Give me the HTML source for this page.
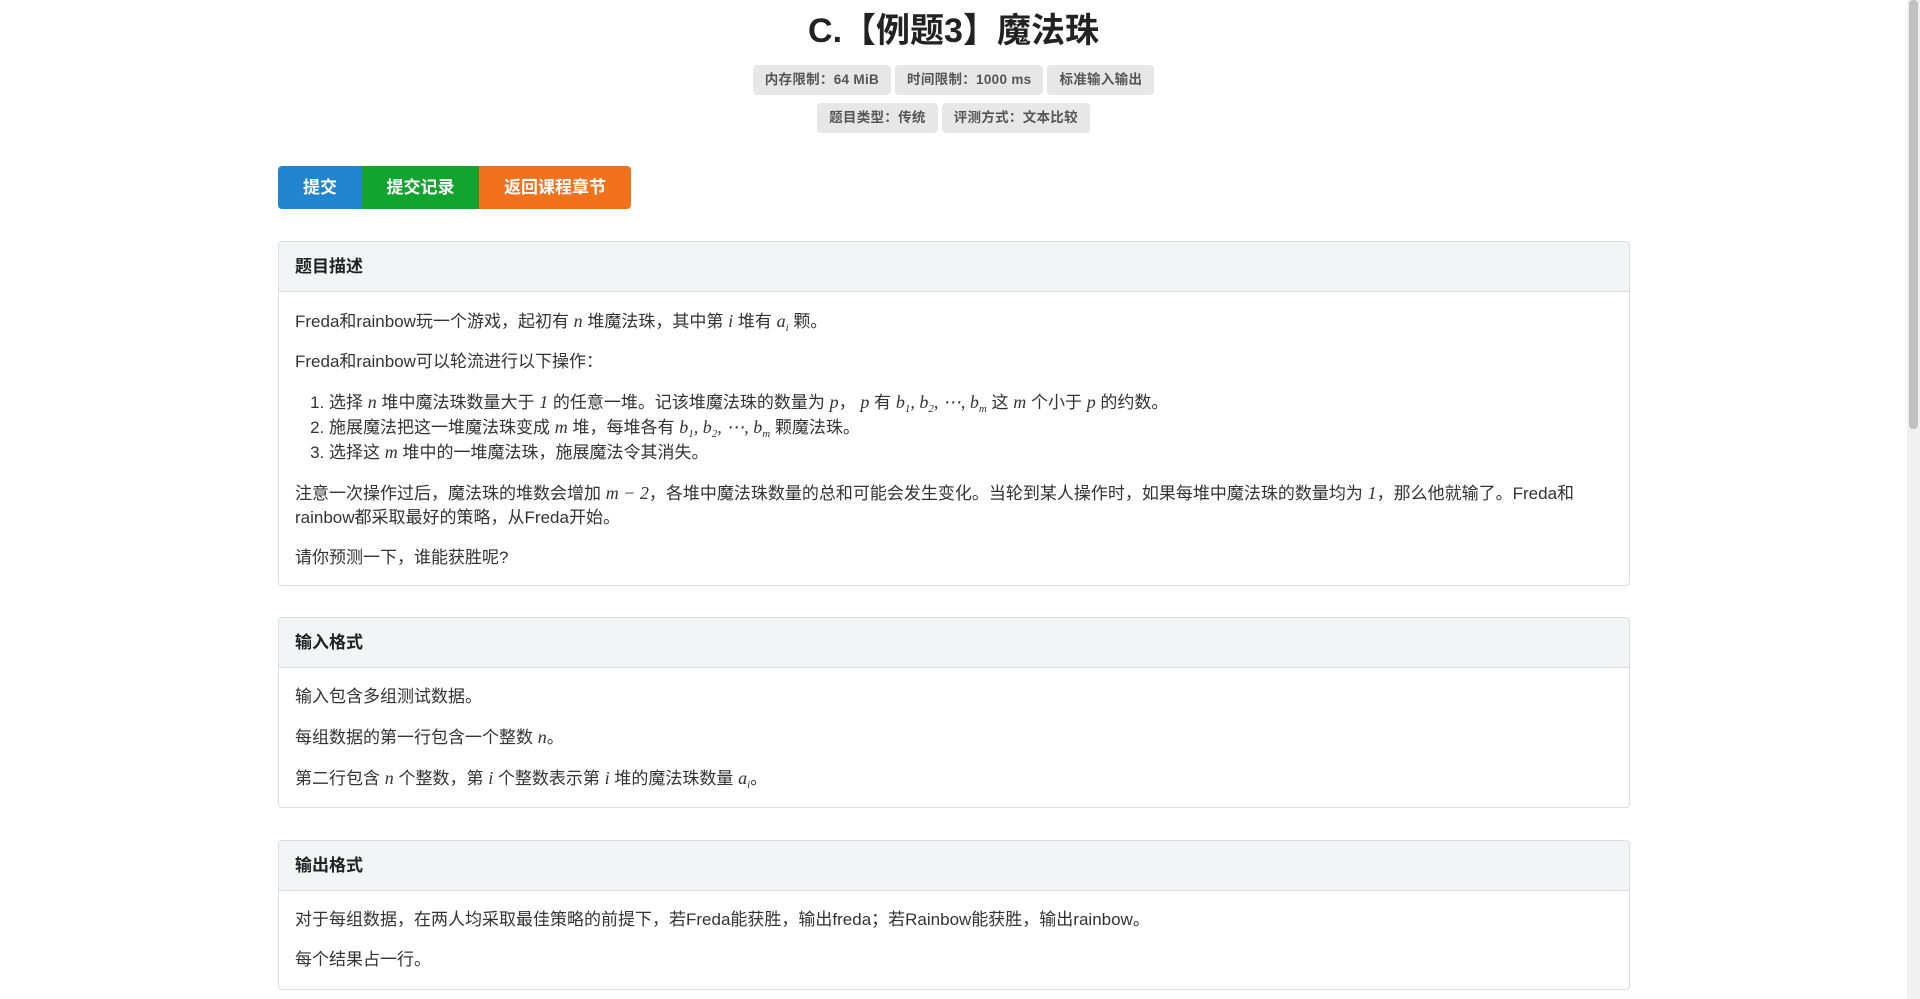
<!DOCTYPE html>
<html><head><meta charset="utf-8"><style>
*{box-sizing:border-box}
body{margin:0;width:1920px;height:999px;overflow:hidden;background:#fff;font-family:"Liberation Sans","Noto Sans CJK SC",sans-serif;color:#333;position:relative}
h1{position:absolute;top:9px;left:0;width:1907px;text-align:center;margin:0;font-size:34px;font-weight:bold;color:#222;line-height:44px}
.tags{position:absolute;left:0;width:1907px;text-align:center;font-size:13.5px}
.tag{display:inline-block;background:#e7e7e7;color:#555;border-radius:4px;height:30px;line-height:30px;padding:0 12px;margin:0 2px;font-weight:bold;letter-spacing:0.3px}
.btns{position:absolute;left:278px;top:166px;display:flex;height:43px;border-radius:4px;overflow:hidden}
.btns div{color:#fff;font-weight:bold;font-size:17px;line-height:43px;text-align:center}
.panel{position:absolute;left:278px;width:1352px;border:1px solid #ddd;border-radius:4px;overflow:hidden}
.ph{background:#f3f4f5;border-bottom:1px solid #ddd;height:50px;line-height:50px;padding-left:16px;font-weight:bold;font-size:17px;color:#222}
.pb{padding:17px 16px 0;font-size:17px;line-height:24px}
.pb p{margin:0 0 16px}
.pb ol{margin:0 0 16px;padding-left:34px}
i{font-family:"Liberation Serif",serif;font-size:18px}
sub{font-size:11px;line-height:0;vertical-align:baseline;position:relative;top:4px}
.sb{position:absolute;right:0;top:0;width:13px;height:999px;background:#f1f1f1}
.sb div{margin:0 auto;width:9px;height:429px;background:#c1c1c1;border-radius:4px}
</style></head><body>
<h1>C.【例题3】魔法珠</h1>
<div class="tags" style="top:65px"><span class="tag">内存限制：64 MiB</span><span class="tag">时间限制：1000 ms</span><span class="tag">标准输入输出</span></div>
<div class="tags" style="top:103px"><span class="tag">题目类型：传统</span><span class="tag">评测方式：文本比较</span></div>
<div class="btns"><div style="width:84px;background:#2185d0">提交</div><div style="width:117px;background:#13a32f">提交记录</div><div style="width:152px;background:#f2711c">返回课程章节</div></div>
<div class="panel" style="top:241px;height:345px"><div class="ph">题目描述</div><div class="pb">
<p>Freda和rainbow玩一个游戏，起初有 <i>n</i> 堆魔法珠，其中第 <i>i</i> 堆有 <i>a<sub>i</sub></i> 颗。</p>
<p>Freda和rainbow可以轮流进行以下操作：</p>
<ol><li>选择 <i>n</i> 堆中魔法珠数量大于 <i>1</i> 的任意一堆。记该堆魔法珠的数量为 <i>p</i>， <i>p</i> 有 <i>b<sub>1</sub>, b<sub>2</sub>, ⋯, b<sub>m</sub></i> 这 <i>m</i> 个小于 <i>p</i> 的约数。</li>
<li>施展魔法把这一堆魔法珠变成 <i>m</i> 堆，每堆各有 <i>b<sub>1</sub>, b<sub>2</sub>, ⋯, b<sub>m</sub></i> 颗魔法珠。</li>
<li>选择这 <i>m</i> 堆中的一堆魔法珠，施展魔法令其消失。</li></ol>
<p>注意一次操作过后，魔法珠的堆数会增加 <i>m − 2</i>，各堆中魔法珠数量的总和可能会发生变化。当轮到某人操作时，如果每堆中魔法珠的数量均为 <i>1</i>，那么他就输了。Freda和<br>rainbow都采取最好的策略，从Freda开始。</p>
<p>请你预测一下，谁能获胜呢?</p></div></div>
<div class="panel" style="top:617px;height:191px"><div class="ph">输入格式</div><div class="pb">
<p>输入包含多组测试数据。</p><p>每组数据的第一行包含一个整数 <i>n</i>。</p><p>第二行包含 <i>n</i> 个整数，第 <i>i</i> 个整数表示第 <i>i</i> 堆的魔法珠数量 <i>a<sub>i</sub></i>。</p></div></div>
<div class="panel" style="top:840px;height:150px"><div class="ph">输出格式</div><div class="pb">
<p>对于每组数据，在两人均采取最佳策略的前提下，若Freda能获胜，输出freda；若Rainbow能获胜，输出rainbow。</p><p>每个结果占一行。</p></div></div>
<div class="sb"><div></div></div>
</body></html>
